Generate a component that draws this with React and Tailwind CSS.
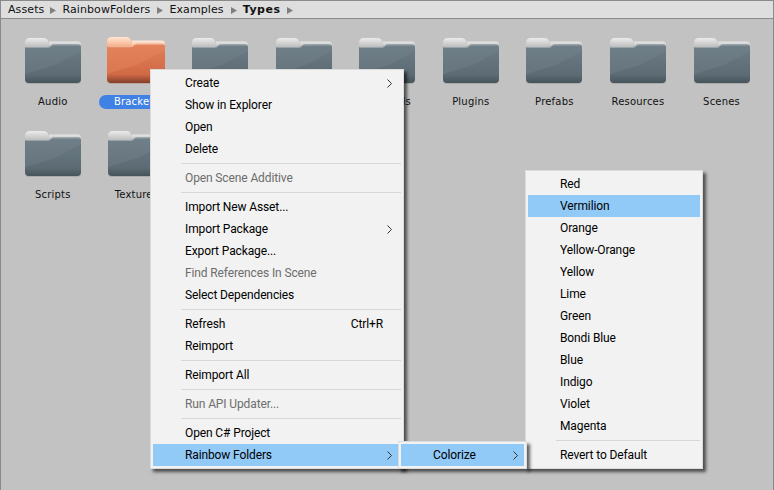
const mainMenu = [
  { label: "Create", arrow: true },
  { label: "Show in Explorer" },
  { label: "Open" },
  { label: "Delete" },
  { sep: true },
  { label: "Open Scene Additive", disabled: true },
  { sep: true },
  { label: "Import New Asset..." },
  { label: "Import Package", arrow: true },
  { label: "Export Package..." },
  { label: "Find References In Scene", disabled: true },
  { label: "Select Dependencies" },
  { sep: true },
  { label: "Refresh", shortcut: "Ctrl+R" },
  { label: "Reimport" },
  { sep: true },
  { label: "Reimport All" },
  { sep: true },
  { label: "Run API Updater...", disabled: true },
  { sep: true },
  { label: "Open C# Project" },
  { label: "Rainbow Folders", arrow: true, active: true },
];

const colorMenu = [
  { label: "Red" },
  { label: "Vermilion", active: true },
  { label: "Orange" },
  { label: "Yellow-Orange" },
  { label: "Yellow" },
  { label: "Lime" },
  { label: "Green" },
  { label: "Bondi Blue" },
  { label: "Blue" },
  { label: "Indigo" },
  { label: "Violet" },
  { label: "Magenta" },
  { sep: true },
  { label: "Revert to Default" },
];

// the 3rd and 4th labels sit completely behind the context menu
const folders = ["Audio", "Brackets", "", "", "Materials", "Plugins", "Prefabs", "Resources", "Scenes", "Scripts", "Textures"];

const Chevron = () => (
  <svg width="5" height="9" viewBox="0 0 5 9" className="shrink-0">
    <path d="M0.5 0.5 L4.5 4.5 L0.5 8.5" fill="none" stroke="#333" strokeWidth="1" />
  </svg>
);

const Crumb = () => (
  <svg width="6" height="7" viewBox="0 0 6 7" className="shrink-0">
    <path d="M0 0 L6 3.5 L0 7 Z" fill="#7f7f7f" />
  </svg>
);

const Folder = ({ id, orange }) => {
  const c = orange
    ? { tabA: "#ffe6d2", tabB: "#f5ab85", backA: "#ffe9da", backB: "#f3b394", top: "#e27f57", mid: "#d06a46", bot: "#84402b", gloss: "#e98a62", edge: "#f9c9ad", rim: "#b9a79f" }
    : { tabA: "#ececec", tabB: "#b8b8b8", backA: "#e6e6e6", backB: "#adadad", top: "#6d7d85", mid: "#5d6c74", bot: "#46535a", gloss: "#75858d", edge: "#a3adb2", rim: "#a9abac" };
  return (
    <svg width={orange ? 58 : 56} height={orange ? 47 : 46} viewBox="0 0 56 46" preserveAspectRatio="none" className="block">
      <defs>
        <linearGradient id={id + "t"} x1="0" y1="0" x2="0" y2="1">
          <stop offset="0" stopColor={c.tabA} />
          <stop offset="1" stopColor={c.tabB} />
        </linearGradient>
        <linearGradient id={id + "k"} x1="0" y1="0" x2="0" y2="1">
          <stop offset="0" stopColor={c.backA} />
          <stop offset="1" stopColor={c.backB} />
        </linearGradient>
        <linearGradient id={id + "b"} x1="0" y1="0" x2="0" y2="1">
          <stop offset="0" stopColor={c.top} />
          <stop offset="0.78" stopColor={c.mid} />
          <stop offset="1" stopColor={c.bot} />
        </linearGradient>
      </defs>
      <path d="M0 42 Q0 46 4 46 H52 Q56 46 56 42 Z" fill={c.rim} />
      <path d="M24 3.5 H53 Q56 3.5 56 7 V12 H24 Z" fill={`url(#${id}k)`} />
      <path d="M0 10 V5 Q0 0 5 0 H18 Q22 0 23 3 L25 9 H0 Z" fill={`url(#${id}t)`} />
      <path d="M0 10 Q0 9 2 9 H23 Q25 9 26 7.5 Q27 6.5 29 6.5 H53 Q56 6.5 56 9.5 V41 Q56 45 52 45 H4 Q0 45 0 41 Z" fill={`url(#${id}b)`} />
      <path d="M0 10 Q0 9 2 9 H23 Q25 9 26 7.5 Q27 6.5 29 6.5 H53 Q56 6.5 56 9.5 V13 L30 27 L0 36 Z" fill={c.gloss} opacity="0.4" />
      <path d="M1 9.5 H23 Q25 9.5 26 8 Q27 7 29 7 H55" fill="none" stroke={c.edge} strokeWidth="0.8" />
    </svg>
  );
};

const MenuRows = ({ items }) =>
  items.map((item, i) =>
    item.sep ? (
      <div key={i} className="h-[7px] flex items-center pl-[28px]">
        <div className="h-px w-full bg-[#d7d7d7]" />
      </div>
    ) : (
      <div
        key={i}
        className={
          "h-[22px] flex items-center justify-between pl-[32px] " +
          (item.active ? "bg-[#91c9f7] " : "") +
          (item.disabled ? "text-[#6d6d6d]" : "text-[#000]")
        }
      >
        <span>{item.label}</span>
        {item.shortcut && <span className="mr-[18px]">{item.shortcut}</span>}
        {item.arrow && <span className="mr-[9px] flex"><Chevron /></span>}
      </div>
    )
  );

const menuClass =
  "absolute bg-[#f2f2f2] border border-[#dcdcdc] p-[2px] shadow-[3px_3px_3px_rgba(0,0,0,0.6)] text-xs leading-none tracking-[-0.12px]";

export default function App() {
  return (
    <div
      className="relative w-[774px] h-[490px] overflow-hidden bg-[#c2c2c2] border border-b-0 border-[#8a8a8a]"
      style={{ fontFamily: 'Roboto, sans-serif' }}
    >
      <div
        className="h-[18px] bg-[#dedede] border-b border-[#8a8a8a] flex items-center pl-[7px] pt-[2px] text-[11px] text-[#111] tracking-[0.1px]"
        style={{ fontFamily: '"DejaVu Sans", sans-serif' }}
      >
        <span>Assets</span>
        <span className="ml-[6px] mr-[6px]"><Crumb /></span>
        <span>RainbowFolders</span>
        <span className="ml-[7px] mr-[6px]"><Crumb /></span>
        <span>Examples</span>
        <span className="ml-[7px] mr-[6px]"><Crumb /></span>
        <span className="font-bold tracking-[0.5px]">Types</span>
        <span className="ml-[7px]"><Crumb /></span>
      </div>

      <div
        className="grid grid-cols-[repeat(9,83.6px)] auto-rows-[93px] pl-[10px] pt-[18px] text-[10px] tracking-[0.2px] text-[#111]"
        style={{ fontFamily: '"DejaVu Sans", sans-serif' }}
      >
        {folders.map((name, i) => (
          <div key={i} className="flex flex-col items-center">
            <div className="h-[47px] flex items-end">
              <Folder id={"f" + i} orange={name === "Brackets"} />
            </div>
            <div
              className={
                "mt-[11px] h-[14px] flex items-center rounded-full leading-none " +
                (name === "Brackets" ? "bg-[#3f81e4] text-white px-[15px]" : "")
              }
            >
              {name}
            </div>
          </div>
        ))}
      </div>

      <div className={menuClass + " left-[149px] top-[68px] w-[254px]"}>
        <MenuRows items={mainMenu} />
      </div>

      <div className={menuClass + " left-[524px] top-[169px] w-[178px]"}>
        <MenuRows items={colorMenu} />
      </div>

      <div className={menuClass + " left-[397px] top-[440px] w-[129px]"}>
        <div className="h-[22px] bg-[#91c9f7] flex items-center justify-between pl-[32px] pr-[6px] text-[#000]">
          <span>Colorize</span>
          <Chevron />
        </div>
      </div>
    </div>
  );
}
